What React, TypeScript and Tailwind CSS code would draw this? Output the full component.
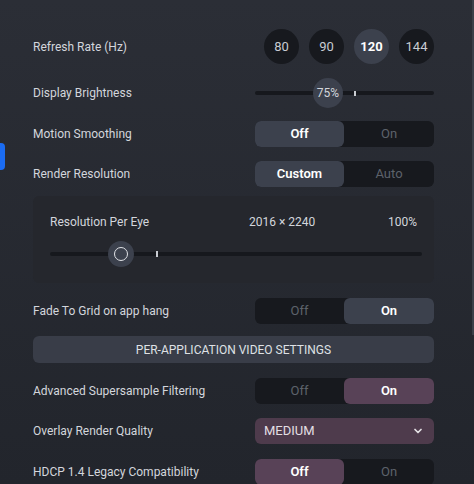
import React from 'react';
import { ChevronDown } from 'lucide-react';

const Row: React.FC<{ label: string; className?: string; children: React.ReactNode }> = ({ label, className, children }) => (
  <div className={`flex items-center justify-between pl-[33px] pr-[40px] ${className ?? ''}`}>
    <span className="text-[12px] text-[#d3d6dc]">{label}</span>
    {children}
  </div>
);

const Toggle: React.FC<{ left: string; right: string; active: 0 | 1; purple?: boolean }> = ({ left, right, active, purple }) => {
  const on = purple ? 'bg-[#584257] text-white font-semibold' : 'bg-[#3c414d] text-white font-semibold';
  const off = 'text-[#5d626b]';
  return (
    <div className="flex h-[26px] w-[179px] rounded-[6px] bg-[#17191e] text-[13px]">
      <div className={`flex w-[89px] items-center justify-center rounded-[6px] ${active === 0 ? on : off}`}>{left}</div>
      <div className={`flex flex-1 items-center justify-center rounded-[6px] ${active === 1 ? on : off}`}>{right}</div>
    </div>
  );
};

export default function App() {
  const rates = ['80', '90', '120', '144'];
  return (
    <div className="relative h-[484px] w-[474px] overflow-hidden bg-gradient-to-b from-[#2b2e36] to-[#22252c] font-['Roboto',sans-serif]">
      {/* left tab marker + scrollbar */}
      <div className="absolute left-[-4px] top-[143px] h-[27px] w-[9px] rounded-[4px] bg-[#1b6cf2]" />
      <div className="absolute right-0 top-0 h-[335px] w-[2px] bg-[#3b3f48]" />

      <div className="flex flex-col pt-[29px]">
        <Row label="Refresh Rate (Hz)">
          <div className="flex gap-[10px]">
            {rates.map(r => (
              <div
                key={r}
                className={`flex h-[35px] w-[35px] items-center justify-center rounded-full text-[13px] ${r === '120' ? 'bg-[#3c414d] font-bold text-white' : 'bg-[#17191e] text-[#c9ccd2]'}`}
              >
                {r}
              </div>
            ))}
          </div>
        </Row>

        <Row label="Display Brightness" className="mt-[14px]">
          <div className="relative flex h-[30px] w-[179px] items-center">
            <div className="h-[4px] w-full rounded-full bg-[#16181d]" />
            <div className="absolute left-[58px] top-0 flex h-[30px] w-[30px] items-center justify-center rounded-full bg-[#3c414d] text-[12px] text-[#d3d6dc]">75%</div>
            <div className="absolute left-[99px] top-[13px] h-[5px] w-[2px] bg-[#c9ccd2]" />
          </div>
        </Row>

        <Row label="Motion Smoothing" className="mt-[13px]">
          <Toggle left="Off" right="On" active={0} />
        </Row>

        <Row label="Render Resolution" className="mt-[14px]">
          <Toggle left="Custom" right="Auto" active={0} />
        </Row>

        <div className="ml-[33px] mr-[40px] mt-[9px] flex h-[87px] flex-col rounded-[6px] bg-[#25272d] pl-[17px] pr-[12px] pt-[17px]">
          <div className="flex items-center pr-[5px] text-[12px] text-[#d3d6dc]">
            <span className="w-[199px]">Resolution Per Eye</span>
            <span className="flex-1">2016 × 2240</span>
            <span>100%</span>
          </div>
          <div className="relative mt-[10px] flex h-[26px] items-center">
            <div className="h-[4px] w-full rounded-full bg-[#16181d]" />
            <div className="absolute left-[58px] top-0 flex h-[26px] w-[26px] items-center justify-center rounded-full bg-[#3c414d]">
              <div className="h-[14px] w-[14px] rounded-full border-[1.5px] border-[#e1e3e7]" />
            </div>
            <div className="absolute left-[106px] top-[10px] h-[6px] w-[2px] bg-[#c9ccd2]" />
          </div>
        </div>

        <Row label="Fade To Grid on app hang" className="mt-[15px]">
          <Toggle left="Off" right="On" active={1} />
        </Row>

        <div className="ml-[33px] mr-[40px] mt-[12px] flex h-[27px] items-center justify-center rounded-[6px] bg-[#393d48] text-[12px] text-[#dfe1e5]">
          PER-APPLICATION VIDEO SETTINGS
        </div>

        <Row label="Advanced Supersample Filtering" className="mt-[15px]">
          <Toggle left="Off" right="On" active={1} purple />
        </Row>

        <Row label="Overlay Render Quality" className="mt-[14px]">
          <div className="flex h-[26px] w-[179px] items-center justify-between rounded-[6px] bg-[#4e3b4c] pl-[9px] pr-[10px] text-[13px] text-[#e3dfe3]">
            <span>MEDIUM</span>
            <ChevronDown className="h-[12px] w-[12px]" strokeWidth={3.5} />
          </div>
        </Row>

        <Row label="HDCP 1.4 Legacy Compatibility" className="mt-[15px]">
          <Toggle left="Off" right="On" active={0} purple />
        </Row>
      </div>
    </div>
  );
}
